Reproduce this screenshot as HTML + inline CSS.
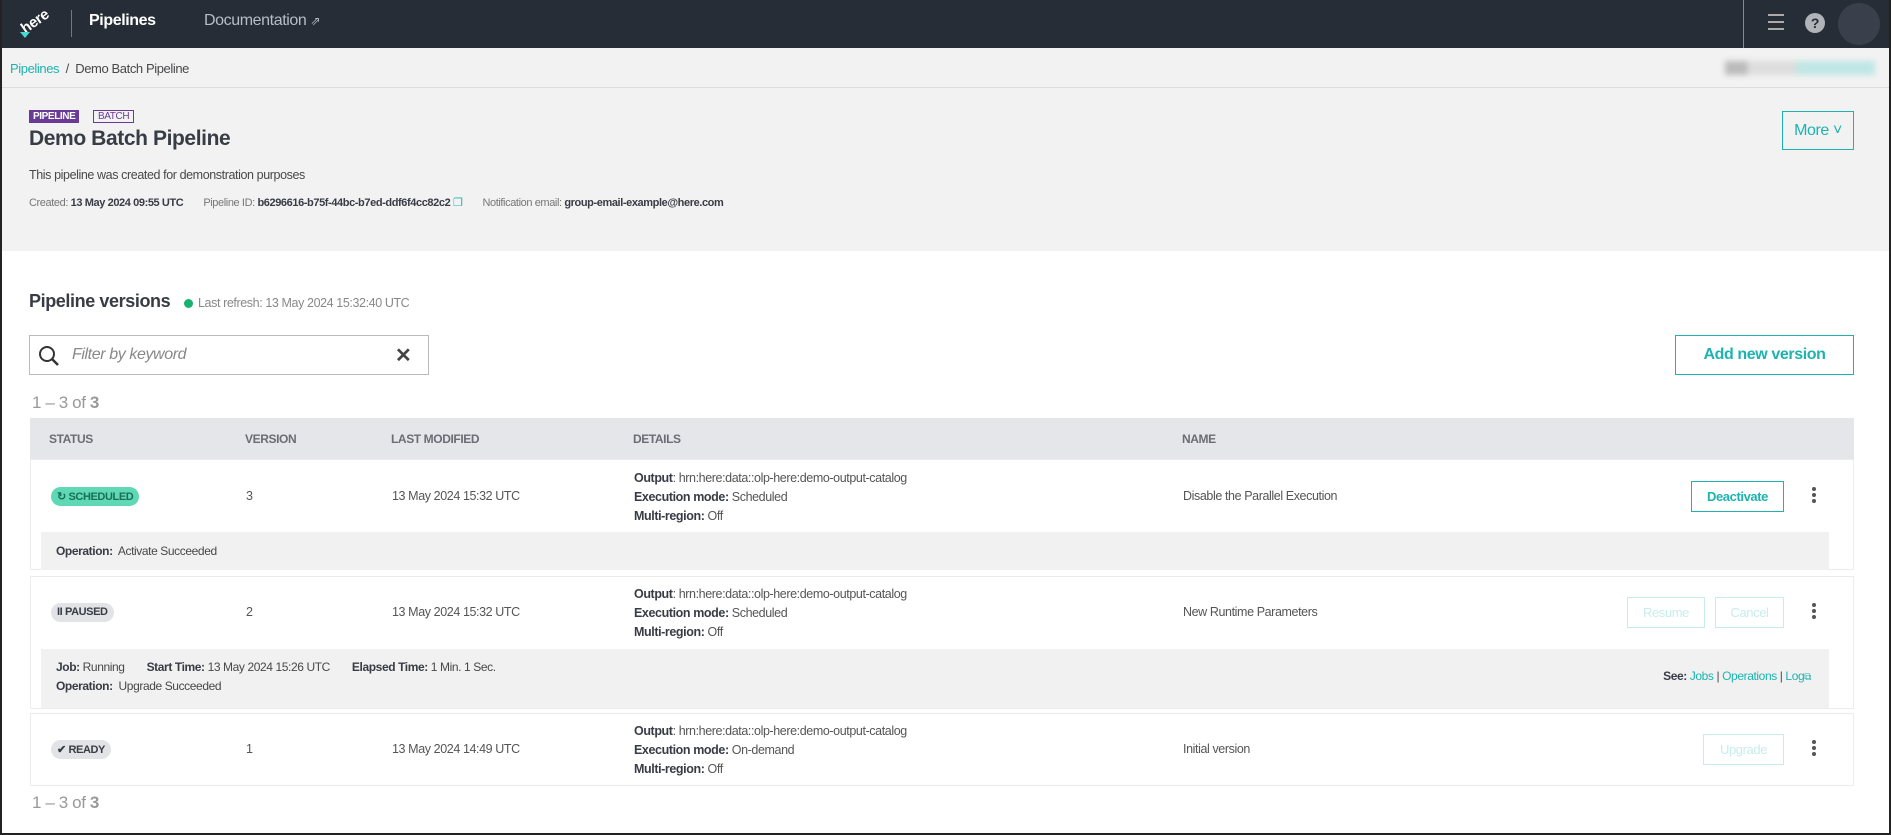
<!DOCTYPE html>
<html><head><meta charset="utf-8"><style>
*{box-sizing:border-box;margin:0;padding:0}
body{width:1891px;height:835px;overflow:hidden;font-family:"Liberation Sans",sans-serif;color:#48484a;background:#fff;position:relative;letter-spacing:-0.4px}
.frame{position:absolute;inset:0;border:2px solid #222;border-top:0;pointer-events:none;z-index:9}
.nav{position:absolute;left:0;top:0;width:1891px;height:48px;background:#272d37;color:#fff}
.abs{position:absolute}
.hdr{position:absolute;left:0;top:48px;width:1891px;height:203px;background:#f2f2f2}
.teal{color:#1db3b0}
.b{font-weight:bold;color:#383c45}
.th{position:absolute;top:418px;left:30px;width:1824px;height:41px;background:#e5e6e9;font-size:12px;font-weight:bold;color:#6a6d74}
.th span{position:absolute;top:14px}
.row{position:absolute;left:30px;width:1824px;border:1px solid #ececec;background:#fff}
.sub{position:absolute;left:10px;right:24px;background:#f1f1f1;font-size:12px}
.pill{position:absolute;height:19px;border-radius:10px;font-size:11px;font-weight:bold;padding:3px 6px 0 6px;white-space:nowrap}
.cell{position:absolute;font-size:12.5px;color:#555}
.det{position:absolute;left:603px;font-size:12.5px;line-height:19px;color:#555}
.btn{position:absolute;height:31px;border:1px solid #1db3b0;color:#1db3b0;font-size:13px;font-weight:bold;text-align:center;line-height:29px;background:#fff}
.dis{border-color:#c8ecec;color:#c8ecec;font-weight:normal}
.kebab{position:absolute;width:4px}
.kebab i{display:block;width:4px;height:4px;border-radius:2px;background:#555;margin-bottom:2px}
</style></head><body>
<div class="nav">
 <div class="abs" style="left:20px;top:13px;font-weight:bold;font-size:15px;transform:rotate(-35deg);color:#fff">here</div>
 <div class="abs" style="left:20px;top:32px;width:0;height:0;border-left:5px solid transparent;border-right:5px solid transparent;border-top:6px solid #48dad0"></div>
 <div class="abs" style="left:71px;top:10px;width:1px;height:27px;background:#777"></div>
 <div class="abs" style="left:89px;top:12px;font-size:16px;font-weight:bold">Pipelines</div>
 <div class="abs" style="left:204px;top:12px;font-size:16px;color:#b8bcc4">Documentation <span style="font-size:12px">⇗</span></div>
 <div class="abs" style="left:1743px;top:0;width:1px;height:48px;background:#888"></div>
 <div class="abs" style="left:1768px;top:14px;width:16px"><div style="height:2px;background:#aaa;margin-bottom:5px"></div><div style="height:2px;background:#aaa;margin-bottom:5px"></div><div style="height:2px;background:#aaa"></div></div>
 <div class="abs" style="left:1805px;top:13px;width:20px;height:20px;border-radius:10px;background:#b0b3b8;color:#272d37;font-weight:bold;font-size:14px;text-align:center;line-height:20px">?</div>
 <div class="abs" style="left:1838px;top:3px;width:42px;height:42px;border-radius:21px;background:#3a404b"></div>
</div>
<div class="hdr">
 <div class="abs" style="left:10px;top:13px;font-size:13px"><span class="teal">Pipelines</span> &nbsp;/&nbsp; Demo Batch Pipeline</div>
 <div class="abs" style="left:1725px;top:13px;width:150px;height:14px;background:linear-gradient(90deg,#bbb 0 15%,#ddd 15% 45%,#bfe6e4 50%);filter:blur(3px)"></div>
 <div class="abs" style="left:0;top:39px;width:1891px;height:1px;background:#ddd"></div>
 <div class="abs" style="left:29px;top:62px;background:#6a3b96;color:#fff;font-size:10px;font-weight:bold;padding:1px 4px">PIPELINE</div>
 <div class="abs" style="left:93px;top:62px;border:1px solid #6a3b96;color:#6a3b96;font-size:10px;padding:0 4px">BATCH</div>
 <div class="abs" style="left:29px;top:79px;font-size:21px;font-weight:bold;color:#383c45">Demo Batch Pipeline</div>
 <div class="abs" style="left:29px;top:120px;font-size:12.5px">This pipeline was created for demonstration purposes</div>
 <div class="abs" style="left:29px;top:148px;font-size:11px;color:#777;white-space:nowrap">Created: <span class="b">13 May 2024 09:55 UTC</span><span style="margin-left:20px">Pipeline ID: <span class="b">b6296616-b75f-44bc-b7ed-ddf6f4cc82c2</span> <span class="teal">❐</span></span><span style="margin-left:20px">Notification email: <span class="b">group-email-example@here.com</span></span></div>
 <div class="btn" style="left:1782px;top:63px;width:72px;height:39px;line-height:37px;font-size:16px;font-weight:normal;background:#f2f2f2">More ˅</div>
</div>
<div class="abs" style="left:29px;top:291px;font-size:18px;font-weight:bold;color:#383c45">Pipeline versions</div>
<div class="abs" style="left:184px;top:299px;width:9px;height:9px;border-radius:5px;background:#16b26e"></div>
<div class="abs" style="left:198px;top:296px;font-size:12.5px;color:#888">Last refresh: 13 May 2024 15:32:40 UTC</div>
<div class="abs" style="left:29px;top:335px;width:400px;height:40px;border:1px solid #bbb">
 <svg class="abs" style="left:8px;top:9px" width="22" height="22" viewBox="0 0 22 22"><circle cx="9" cy="9" r="7" fill="none" stroke="#333" stroke-width="2"/><path d="M14 14l6 6" stroke="#333" stroke-width="2.5"/></svg>
 <div class="abs" style="left:42px;top:10px;font-size:16px;font-style:italic;color:#888">Filter by keyword</div>
 <div class="abs" style="left:365px;top:7px;font-size:20px;font-weight:bold;color:#444">✕</div>
</div>
<div class="btn" style="left:1675px;top:335px;width:179px;height:40px;line-height:38px;font-size:16px">Add new version</div>
<div class="abs" style="left:32px;top:393px;font-size:17px;color:#999">1 – 3 of <b>3</b></div>
<div class="th"><span style="left:19px">STATUS</span><span style="left:215px">VERSION</span><span style="left:361px">LAST MODIFIED</span><span style="left:603px">DETAILS</span><span style="left:1152px">NAME</span></div>

<div class="row" style="top:459px;height:111px">
 <div class="pill" style="left:20px;top:27px;background:#5fd9b5;color:#1a6e58">↻ SCHEDULED</div>
 <div class="cell" style="left:215px;top:29px">3</div>
 <div class="cell" style="left:361px;top:29px">13 May 2024 15:32 UTC</div>
 <div class="det" style="top:9px"><b class="b">Output</b>: hrn:here:data::olp-here:demo-output-catalog<br><b class="b">Execution mode:</b> Scheduled<br><b class="b">Multi-region:</b> Off</div>
 <div class="cell" style="left:1152px;top:29px">Disable the Parallel Execution</div>
 <div class="btn" style="left:1660px;top:21px;width:93px">Deactivate</div>
 <div class="kebab" style="left:1781px;top:27px"><i></i><i></i><i></i></div>
 <div class="sub" style="top:72px;height:38px"><div class="abs" style="left:15px;top:12px"><b class="b">Operation:</b>&nbsp; Activate Succeeded</div></div>
</div>

<div class="row" style="top:576px;height:133px">
 <div class="pill" style="left:20px;top:26px;background:#e2e3e6;color:#383c45">II PAUSED</div>
 <div class="cell" style="left:215px;top:28px">2</div>
 <div class="cell" style="left:361px;top:28px">13 May 2024 15:32 UTC</div>
 <div class="det" style="top:8px"><b class="b">Output</b>: hrn:here:data::olp-here:demo-output-catalog<br><b class="b">Execution mode:</b> Scheduled<br><b class="b">Multi-region:</b> Off</div>
 <div class="cell" style="left:1152px;top:28px">New Runtime Parameters</div>
 <div class="btn dis" style="left:1596px;top:20px;width:78px">Resume</div>
 <div class="btn dis" style="left:1684px;top:20px;width:69px">Cancel</div>
 <div class="kebab" style="left:1781px;top:26px"><i></i><i></i><i></i></div>
 <div class="sub" style="top:72px;height:59px">
  <div class="abs" style="left:15px;top:11px;white-space:nowrap;font-size:12px"><b class="b">Job:</b> Running<span style="margin-left:22px"><b class="b">Start Time:</b> 13 May 2024 15:26 UTC</span><span style="margin-left:22px"><b class="b">Elapsed Time:</b> 1 Min. 1 Sec.</span></div>
  <div class="abs" style="left:15px;top:30px;font-size:12px"><b class="b">Operation:</b>&nbsp; Upgrade Succeeded</div>
  <div class="abs" style="right:18px;top:20px;font-size:12px"><b class="b">See:</b> <span class="teal">Jobs</span> | <span class="teal">Operations</span> | <span class="teal">Log<span style="font-size:10px">⧉</span></span></div>
 </div>
</div>

<div class="row" style="top:713px;height:73px">
 <div class="pill" style="left:20px;top:26px;background:#e2e3e6;color:#383c45">✔ READY</div>
 <div class="cell" style="left:215px;top:28px">1</div>
 <div class="cell" style="left:361px;top:28px">13 May 2024 14:49 UTC</div>
 <div class="det" style="top:8px"><b class="b">Output</b>: hrn:here:data::olp-here:demo-output-catalog<br><b class="b">Execution mode:</b> On-demand<br><b class="b">Multi-region:</b> Off</div>
 <div class="cell" style="left:1152px;top:28px">Initial version</div>
 <div class="btn dis" style="left:1672px;top:20px;width:81px">Upgrade</div>
 <div class="kebab" style="left:1781px;top:26px"><i></i><i></i><i></i></div>
</div>
<div class="abs" style="left:32px;top:793px;font-size:17px;color:#999">1 – 3 of <b>3</b></div>
<div class="frame"></div>
</body></html>
